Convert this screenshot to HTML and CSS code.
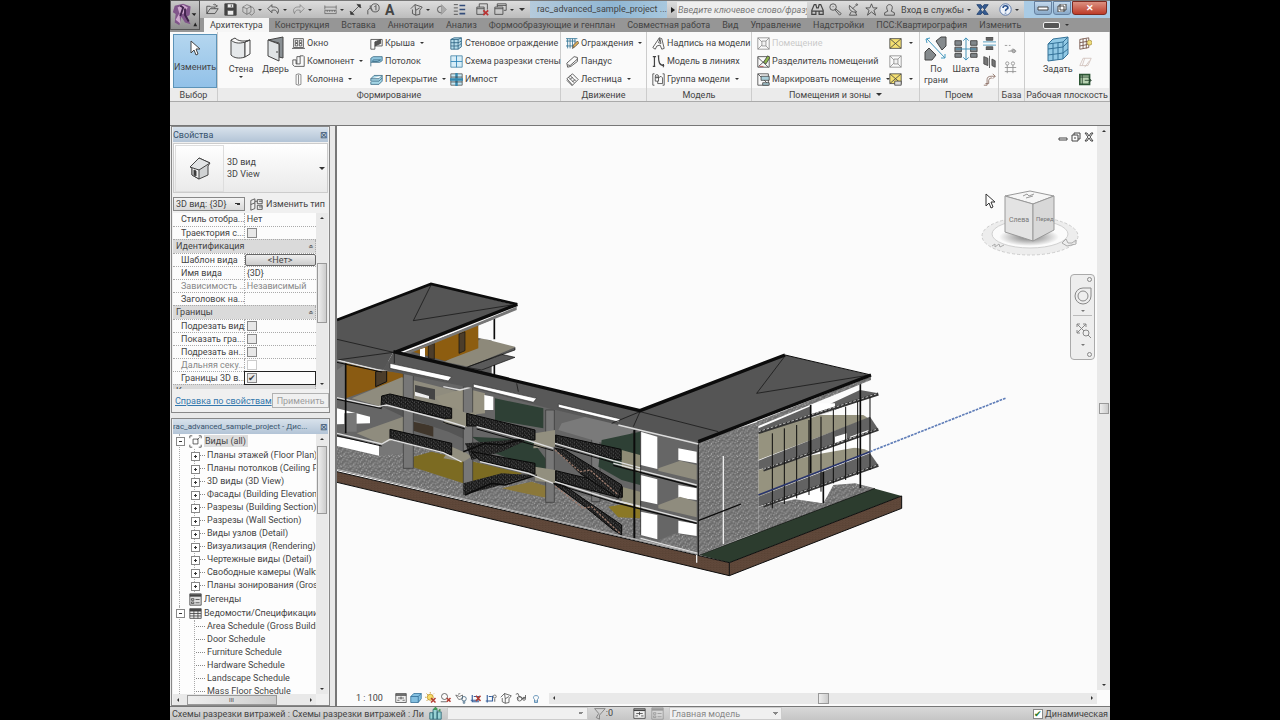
FILE: index.html
```html
<!DOCTYPE html>
<html lang="ru">
<head>
    <meta charset="UTF-8">
    <meta name="viewport" content="width=device-width, initial-scale=1.0">
    <title>rac_advanced_sample_project</title>
    <link rel="stylesheet" href="styles.css">
</head>
<body>
    <!-- Icon set -->
    <svg class="sprite" aria-hidden="true">
        <symbol id="open" viewBox="0 0 16 16"><path d="M1 13V4h4l1 1h5v2M1 13l4-6h10l-4 6zM9 2c2-1 4 0 4 2m-2-1 2 2 1-2"/></symbol>
        <symbol id="save" viewBox="0 0 16 16"><path d="M1 1h13l1 1v13H1z" fill="#444"/><path d="M4 1h8v5H4zM4 9h8v6H4z" fill="#eee"/><path d="M9 2v3"/></symbol>
        <symbol id="sync" viewBox="0 0 16 16"><path opacity=".6" d="m1 5 5-3 5 2v7l-5 3-5-3zM1 5l5 2 5-3M6 7v7M10 5h3l2 3v4l-3 3-3-2"/></symbol>
        <symbol id="undo" viewBox="0 0 16 16"><path d="M6 2 1 7l5 5V9c4-1 6 0 7 4 3-5 0-9-7-8z"/></symbol>
        <symbol id="redo" viewBox="0 0 16 16"><path opacity=".5" d="m10 2 5 5-5 5V9c-4-1-6 0-7 4-3-5 0-9 7-8z"/></symbol>
        <symbol id="measure" viewBox="0 0 16 16"><path opacity=".7" d="M1 3v5M15 3v5M1 5h14M1 9h14v4H1zM4 9v2M7 9v2M10 9v2M13 9v2"/></symbol>
        <symbol id="dim" viewBox="0 0 16 16"><path d="M3 13 13 3M1 10l5 5M10 1l5 5"/><path d="M2 14v-4l4 4zM14 2v4l-4-4z" fill="#333"/></symbol>
        <symbol id="tag" viewBox="0 0 16 16"><path d="M1 14V9l3-3 3 3M4 6V3"/><circle cx="10" cy="6" r="5"/><path d="M9 5l2-2v6"/></symbol>
        <symbol id="home" viewBox="0 0 16 16"><path d="m1 7 5-5 9 3-3 4v5l-5 1-4-2V8M6 2l1 7 5-3M7 9v6"/></symbol>
        <symbol id="section" viewBox="0 0 16 16"><circle cx="7" cy="8" r="4"/><path d="M8 2v12l6-6z" fill="#aaa" stroke="#999"/></symbol>
        <symbol id="lines" viewBox="0 0 16 16"><path d="M1 2h5M1 6h5M1 10h5M1 14h5" stroke-width="1"/><path d="M8 3h7M8 8h7M8 13h7" stroke="#334c7a" stroke-width="2"/></symbol>
        <symbol id="closewin" viewBox="0 0 16 16"><path d="M4 5V1h10v7M1 5h9v9H1zM1 7h9"/><path d="m9 9 6 6m0-6-6 6" stroke="#b33" stroke-width="2"/></symbol>
        <symbol id="windows" viewBox="0 0 16 16"><path d="M4 5V1h11v8h-3M1 5h10v9H1zM1 7h10M4 3h11"/></symbol>
        <symbol id="binoc" viewBox="0 0 16 16"><path d="M1 14V9l3-7h2l1 4h2l1-4h2l3 7v5h-5v-4H6v4zM1 10h5M10 10h5" stroke-width="1.5"/></symbol>
        <symbol id="key" viewBox="0 0 16 16"><circle cx="5" cy="5" r="4"/><path d="m7 8 6 7 2-2-7-6M5 4v1"/></symbol>
        <symbol id="dish" viewBox="0 0 16 16"><path d="M3 3c-1 6 3 9 9 8zM7 7l4-4M5 11l-2 4h9l-2-4"/><circle cx="12" cy="2" r="1"/></symbol>
        <symbol id="star" viewBox="0 0 16 16"><path d="m8 1 2 5h5l-4 3 2 6-5-4-5 4 2-6-4-3h5z"/></symbol>
        <symbol id="user" viewBox="0 0 16 16"><path d="M5 8c-3-8 9-8 6 0l-1 2 4 2v3H2v-3l4-2z"/></symbol>
        <symbol id="exchange" viewBox="0 0 16 16"><path d="M1 2h5l9 12h-5zM15 2h-5L1 14h5z" fill="#345a91" stroke="#23436f"/></symbol>
        <symbol id="help" viewBox="0 0 16 16"><circle cx="8" cy="8" r="7" fill="#eef3fa" stroke="#4668a0"/><path d="M5 6c0-4 6-3 6 0 0 2-3 1-3 4M8 12v1" stroke="#28508c" stroke-width="2"/></symbol>
        <symbol id="arrow" viewBox="0 0 16 16"><path d="M4 1v12l3-3 2 5 2-1-2-5h4z" fill="#fff"/></symbol>
        <symbol id="wall" viewBox="0 0 24 26"><path d="M2 4c3 3 8 4 14 2v15c-6 2-11 1-14-2z" fill="#e5e8ea"/><path d="m2 4 4-2c3 3 8 4 15 2l-5 2M21 4v14l-5 3V6z" fill="#f8f8f8"/></symbol>
        <symbol id="door" viewBox="0 0 18 26"><path d="M1 4 16 1v21l-4-1V7L1 4z" fill="#8a9094"/><path d="m1 4 11 4v17L1 20z" fill="#dfe3e5"/><path d="M10 15v2"/></symbol>
        <symbol id="window" viewBox="0 0 16 16"><path d="M2 2h12v11H2zM0 14h16M4 4h3v3H4zM9 4h3v3H9zM4 8h3v3H4zM9 8h3v3H9z"/></symbol>
        <symbol id="component" viewBox="0 0 16 16"><path d="M1 6h4v5h5V1h4l1 1v12H3l-2-2zM6 2h4M6 2v9"/></symbol>
        <symbol id="column" viewBox="0 0 16 16"><path d="M5 2q3-2 6 0v12q-3 2-6 0zM8 2v12" stroke="#777"/></symbol>
        <symbol id="roof" viewBox="0 0 16 16"><path d="M1 15V3h14v8H6v4z"/><path d="M6 11V6l7-3v5z" fill="#555"/></symbol>
        <symbol id="ceiling" viewBox="0 0 16 16"><path d="M1 14V4l3-2h11v5l-3 2H1M4 6h9L9 8H3z" fill="#8fc5dd" stroke="#3c6c86"/></symbol>
        <symbol id="floor" viewBox="0 0 16 16"><path d="m1 7 4-4h10l-4 4zM1 7v3h10l4-4V3M1 11v3h10l4-4V6" fill="#a6d6e6" stroke="#3c6c86"/></symbol>
        <symbol id="curtain" viewBox="0 0 16 16"><path d="M1 3 5 1h9v11l-4 3H1zM1 3h9v12M10 3l4-2M5 3v12M1 7h9l4-2M1 11h9l4-3" fill="#b5dbea" stroke="#276080"/></symbol>
        <symbol id="grid" viewBox="0 0 16 16"><path d="M1 1h14v14H1z" fill="#d7edf7" stroke="#4584a4"/><path d="M8 1v14M1 8h14" stroke="#287fb4"/></symbol>
        <symbol id="mullion" viewBox="0 0 16 16"><path d="M1 1h14v14H1z" fill="#c6e8f4" stroke="#555"/><path d="M8 0v16M0 8h16" stroke="#3587ad" stroke-width="3"/><path d="M1 5h14M1 11h14" stroke="#444"/></symbol>
        <symbol id="railing" viewBox="0 0 16 16"><path d="M0 2h14M0 5h12M2 2v12M5 2v12M8 2v10M11 2v6M0 11h8" stroke="#2d7192"/><path d="m8 14 1-4 5-5 2 2-5 5z" fill="#e6b255"/></symbol>
        <symbol id="ramp" viewBox="0 0 16 16"><path d="m1 10 9-8 4 1v5l-8 6-4 1zM2 12l3 1 9-8"/></symbol>
        <symbol id="stair" viewBox="0 0 16 16"><path d="m1 7 7-6 7 7-7 7zM3 5l7 7M5 3l7 7M1 9l7 7M5 8l3-3M8 11l3-3"/></symbol>
        <symbol id="text" viewBox="0 0 16 16"><path d="m1 13 8-12 3 1 3 12-3 1-2-5-4 1-2 4zM8 7l2-4 1 5zM9 1v4"/></symbol>
        <symbol id="mlines" viewBox="0 0 16 16"><path d="M1 2h4M3 2v12M1 14h3M8 1c0 8 1 12 7 12M7 1h2M14 11v4" stroke-width="1.5"/></symbol>
        <symbol id="group" viewBox="0 0 16 16"><path d="M3 1H1v14h2M13 1h2v14h-2M4 5h4v5H4zM8 6l3-2 2 2v7H7v-3"/><circle cx="6" cy="4" r="2"/></symbol>
        <symbol id="room" viewBox="0 0 16 16"><path d="M1 1h14v14H1zM1 1l14 14M15 1 1 15"/><path d="M6 5h5v6H6z" fill="#eee"/></symbol>
        <symbol id="divider" viewBox="0 0 16 16"><path d="M1 2h14v13H1zM1 3l13 12M14 3 2 14"/><path d="m8 9 5-8 3 2-5 8z" fill="#8fb64c"/><path d="M3 14h5" stroke="#b54141"/></symbol>
        <symbol id="roomtag" viewBox="0 0 16 16"><path d="M1 1h13v14H1zM1 1l13 13"/><path d="M5 4h10v5H5zM7 12h8v3H7z" fill="#a9ced9"/></symbol>
        <symbol id="area" viewBox="0 0 16 16"><path d="M1 2h14v12H1z" fill="#f4df70"/><path d="m1 2 14 12M15 2 1 14"/></symbol>
        <symbol id="areatag" viewBox="0 0 16 16"><path d="M1 1h14v12H1z" fill="#f4df70"/><path d="m1 1 14 12M15 1 1 13"/><path d="M7 10h8v5H7z" fill="#ddd"/></symbol>
        <symbol id="face" viewBox="0 0 24 26"><path d="m3 3 18 19M6 2 2 3l1 4M21 18v4h-4" stroke="#4297bd"/><path d="m12 5 5-4h5v9l-4 4zM1 16l4-4 7 7-4 5H1z" fill="#858a8d"/></symbol>
        <symbol id="shaft" viewBox="0 0 26 26"><path d="M1 4h7v5H1zM18 4h7v5h-7zM1 11h7v5H1zM18 11h7v5h-7zM1 18h7v4H1zM18 18h7v4h-7z" fill="#81878b"/><path d="M13 1v24M2 13h22M10 4l3-3 3 3M10 22l3 3 3-3" stroke="#398cb4"/></symbol>
        <symbol id="opening" viewBox="0 0 16 16"><path d="M4 0h8v4H4zM4 12h8v4H4z" fill="#666"/><path d="M0 6h16M0 10h16" stroke="#398cb4"/></symbol>
        <symbol id="vertical" viewBox="0 0 16 16"><path d="M1 2l5 2v9l-5-2zM11 5l4 2v8l-4-2z" fill="#777"/><path d="M8 1v15"/></symbol>
        <symbol id="dormer" viewBox="0 0 16 16"><path d="M1 15h4V8q0-4 5-4h5M3 13h4V9q0-3 4-3M12 1l3 3-3 3" stroke="#86675c"/></symbol>
        <symbol id="level" viewBox="0 0 16 16"><path d="M1 3h3M6 3h2M5 10h10M8 10l3-3 3 3"/><circle cx="12" cy="10" r="2" fill="#888"/></symbol>
        <symbol id="axis" viewBox="0 0 16 16"><path d="M4 5v10M11 5v10M1 8h14M1 13h14"/><circle cx="4" cy="3" r="2"/><circle cx="11" cy="3" r="2"/></symbol>
        <symbol id="plane" viewBox="0 0 24 26"><path d="m2 8 5-5 15-2v17l-5 5-15 2z" fill="#91c9e5" stroke="#347298"/><path d="M2 8l15-2v17M17 6l5-5M7 7v17M12 7v17M2 13l15-2 5-5M2 19l15-2 5-4" stroke="#347298"/></symbol>
        <symbol id="show" viewBox="0 0 16 16"><path d="M1 3l11-2v12L1 15zM1 7l11-2M1 11l11-2M5 2v12M9 2v12" stroke="#6c4a3d"/><circle cx="13" cy="7" r="3" fill="#eedc79" stroke="#aa9448"/></symbol>
        <symbol id="ref" viewBox="0 0 16 16"><path d="m1 13 4-9h10l-4 9zM7 4l-3 9M13 7l-6 8" stroke="#b59b91"/></symbol>
        <symbol id="viewer" viewBox="0 0 16 16"><path d="M1 2h12v12H1z" fill="#b9d3b2" stroke="#2d5635" stroke-width="2"/><path d="M4 2v12M1 5h12M7 9h8m-3-3 3 3-3 3" stroke="#203d29"/></symbol>
        <symbol id="house" viewBox="0 0 26 26"><path d="m3 12 9-9 11 5-2 3v9l-9 4-7-4v-8z" fill="#d0d2d3"/><path d="m5 12 6-6 1 9v9l-7-4z" fill="#eee"/><path d="m12 3 11 5-11 7-9-3z" fill="#e2e4e5"/><path d="M7 15v5l2 1v-5z" fill="#333"/></symbol>
        <symbol id="type" viewBox="0 0 16 16"><path d="M1 3l5-2v12l-5 2zM1 8l5-2M6 4h3M9 2h6v5H9zM9 9h6v5H9zM11 4h4M11 11h4"/></symbol>
        <symbol id="views" viewBox="0 0 16 16"><path d="M4 1H1v3M12 1h3v3M1 12v3h3M15 12v3h-3M5 5h6v6H5zM10 6l3-3"/></symbol>
        <symbol id="legend" viewBox="0 0 16 16"><path d="M1 1h14v14H1z" fill="#ddd"/><path d="M1 3h14" stroke-width="3"/><path d="M3 7h3v2H3zM3 11h3v2H3zM8 8h5M8 12h5"/></symbol>
        <symbol id="schedule" viewBox="0 0 16 16"><path d="M1 2h14v12H1z" fill="#eee"/><path d="M1 4h14" stroke-width="3"/><path d="M1 8h14M1 11h14M6 4v10M11 4v10"/></symbol>
        <symbol id="sheet" viewBox="0 0 16 16"><path d="M1 2h14v12H1z" fill="#eee"/><path d="M1 4h14" stroke-width="2"/><path d="M4 8h8M3 11h3M10 11h3M8 6v4"/></symbol>
        <symbol id="box" viewBox="0 0 16 16"><path d="m1 6 4-4h10v7l-4 5H1zM1 6h10v8M11 6l4-4" fill="#83bfe0" stroke="#2c6993"/></symbol>
        <symbol id="sun" viewBox="0 0 16 16"><circle cx="7" cy="7" r="4" fill="#f5dc68" stroke="#bf8c20"/><path d="M7 0v2M0 7h2M2 2l2 2M12 2l-1 1M2 12l2-2" stroke="#bf8c20"/><path d="m8 8 6 6m0-6-6 6" stroke="#b23c32" stroke-width="2"/></symbol>
        <symbol id="shadow" viewBox="0 0 16 16"><circle cx="6" cy="6" r="4"/><path d="M1 13h8"/><path d="m9 8 5 5m0-5-5 5" stroke="#b23c32" stroke-width="2"/></symbol>
        <symbol id="lock" viewBox="0 0 16 16"><path d="M1 4l4 6 5-1V4L6 6 1 4M4 3l3-1" stroke="#555"/><circle cx="12" cy="9" r="3" stroke="#355f7c"/><path d="M11 12v3h2v-3" stroke="#355f7c"/></symbol>
        <symbol id="nocrop" viewBox="0 0 16 16"><path d="M3 4v9h9M1 11h10V6M5 6h8" stroke="#355f9c" stroke-width="1.5"/><path d="m8 5 6 7m0-7-6 7" stroke="#b23c32" stroke-width="2"/></symbol>
        <symbol id="crop" viewBox="0 0 16 16"><path d="M3 4v10M1 12h9V5M5 6h4" stroke="#355f9c" stroke-width="1.5"/><circle cx="13" cy="6" r="2" stroke="#555"/><path d="M13 9v4"/></symbol>
        <symbol id="glasses" viewBox="0 0 16 16"><path d="m1 3 3-1 2 5c2-1 3 0 4 2l4-1V4M3 7l2 3"/><circle cx="6" cy="9" r="3"/><circle cx="12" cy="9" r="2"/></symbol>
        <symbol id="bulb" viewBox="0 0 16 16"><path d="M6 10c-6-7 10-7 4 0v4H6zM6 12h4" stroke="#3c77a5"/></symbol>
        <symbol id="works" viewBox="0 0 16 16"><path d="M1 7h4v8H1zM5 3h5v12H5zM10 6h5v9h-5z" fill="#98d2d5" stroke="#276372"/><path d="m6 3 2-2 2 2M12 5l2-2" stroke="#409b55" stroke-width="2"/></symbol>
        <symbol id="filter" viewBox="0 0 16 16"><path d="M2 2h13l-7 8v5l-4-2 3-5z" stroke="#777"/></symbol>
    </svg>

    <div class="app">
        <header class="top">
            <button class="logo" aria-label="Меню приложения">
                <svg viewBox="0 0 30 30">
                    <path d="M4 5 13 3l8 3-1 9-3 2 4 8-6-2-4-6-2 9-5-3 1-9-3-2z" fill="#80558a"/>
                    <path d="m7 7 6-3 5 3-5 7-4-1zM5 20l4-7 1 11z" fill="#cfa8cf"/>
                    <path d="m10 5 3 2-3 9M15 8v7l4 7" stroke="#40234b" fill="none" stroke-width="2"/>
                    <path d="M22 13h5l-2 3zM24 27l2-4 2 4z" fill="#222"/>
                </svg>
            </button>
            <div class="titlebar">
                <div class="quick">
                    <button><svg><use href="#open"/></svg></button>
                    <button><svg><use href="#save"/></svg></button>
                    <button class="drop"><svg><use href="#sync"/></svg></button>
                    <button class="drop"><svg><use href="#undo"/></svg></button>
                    <button class="drop"><svg><use href="#redo"/></svg></button>
                    <button class="drop wide"><svg><use href="#measure"/></svg></button>
                    <button><svg><use href="#dim"/></svg></button>
                    <button><svg><use href="#tag"/></svg></button>
                    <button class="letter">A</button>
                    <button class="drop wide"><svg><use href="#home"/></svg></button>
                    <button><svg><use href="#section"/></svg></button>
                    <button class="wide-icon"><svg><use href="#lines"/></svg></button>
                    <button><svg><use href="#closewin"/></svg></button>
                    <button class="drop"><svg><use href="#windows"/></svg></button>
                    <button class="more" aria-label="Настройка панели"></button>
                </div>
                <div class="doc-title">rac_advanced_sample_project ...</div>
                <div class="search">
                    <span class="play"></span>
                    <input type="text" aria-label="Поиск" placeholder="Введите ключевое слово/фразу">
                </div>
                <div class="services">
                    <button><svg><use href="#binoc"/></svg></button>
                    <button><svg><use href="#key"/></svg></button>
                    <button><svg><use href="#dish"/></svg></button>
                    <button><svg><use href="#star"/></svg></button>
                    <button><svg><use href="#user"/></svg></button>
                    <button class="drop">Вход в службы</button>
                    <button><svg><use href="#exchange"/></svg></button>
                    <button class="drop help"><svg><use href="#help"/></svg></button>
                </div>
                <div class="window-buttons">
                    <button aria-label="Свернуть"><svg viewBox="0 0 12 8"><path d="M1 3h10v3H1z" fill="#fff"/></svg></button>
                    <button aria-label="Развернуть"><svg viewBox="0 0 12 8"><path d="M4 0h6v6H4zM2 2h6v6H2z" fill="#fff"/></svg></button>
                    <button class="close" aria-label="Закрыть">✕</button>
                </div>
            </div>
            <nav class="tabs">
                <a class="active" href="#">Архитектура</a>
                <a href="#">Конструкция</a>
                <a href="#">Вставка</a>
                <a href="#">Аннотации</a>
                <a href="#">Анализ</a>
                <a href="#">Формообразующие и генплан</a>
                <a href="#">Совместная работа</a>
                <a href="#">Вид</a>
                <a href="#">Управление</a>
                <a href="#">Надстройки</a>
                <a href="#">ПСС:Квартирография</a>
                <a href="#">Изменить</a>
                <button class="collapse drop" aria-label="Свернуть ленту"><span></span></button>
            </nav>
        </header>

        <section class="ribbon">
            <div class="panel">
                <div class="tools select-tools">
                    <button class="big selected"><svg><use href="#arrow"/></svg>Изменить</button>
                </div>
                <h2>Выбор</h2>
            </div>
            <div class="panel">
                <div class="tools build-tools">
                    <button class="big caret-under"><svg><use href="#wall"/></svg>Стена</button>
                    <button class="big"><svg><use href="#door"/></svg>Дверь</button>
                    <div class="stack">
                        <button><svg><use href="#window"/></svg>Окно</button>
                        <button class="drop"><svg><use href="#component"/></svg>Компонент</button>
                        <button class="drop"><svg><use href="#column"/></svg>Колонна</button>
                    </div>
                    <div class="stack">
                        <button class="drop"><svg><use href="#roof"/></svg>Крыша</button>
                        <button><svg><use href="#ceiling"/></svg>Потолок</button>
                        <button class="drop"><svg><use href="#floor"/></svg>Перекрытие</button>
                    </div>
                    <div class="stack">
                        <button><svg><use href="#curtain"/></svg>Стеновое ограждение</button>
                        <button><svg><use href="#grid"/></svg>Схема разрезки стены</button>
                        <button><svg><use href="#mullion"/></svg>Импост</button>
                    </div>
                </div>
                <h2>Формирование</h2>
            </div>
            <div class="panel">
                <div class="tools">
                    <div class="stack">
                        <button class="drop"><svg><use href="#railing"/></svg>Ограждения</button>
                        <button><svg><use href="#ramp"/></svg>Пандус</button>
                        <button class="drop"><svg><use href="#stair"/></svg>Лестница</button>
                    </div>
                </div>
                <h2>Движение</h2>
            </div>
            <div class="panel">
                <div class="tools">
                    <div class="stack">
                        <button><svg><use href="#text"/></svg>Надпись на модели</button>
                        <button><svg><use href="#mlines"/></svg>Модель в линиях</button>
                        <button class="drop"><svg><use href="#group"/></svg>Группа модели</button>
                    </div>
                </div>
                <h2>Модель</h2>
            </div>
            <div class="panel">
                <div class="tools room-tools">
                    <div class="stack">
                        <button disabled><svg><use href="#room"/></svg>Помещение</button>
                        <button><svg><use href="#divider"/></svg>Разделитель помещений</button>
                        <button class="drop"><svg><use href="#roomtag"/></svg>Маркировать помещение</button>
                    </div>
                    <div class="stack">
                        <button class="drop"><svg><use href="#area"/></svg></button>
                        <button disabled><svg><use href="#room"/></svg></button>
                        <button class="drop"><svg><use href="#areatag"/></svg></button>
                    </div>
                </div>
                <h2 class="drop">Помещения и зоны</h2>
            </div>
            <div class="panel">
                <div class="tools opening-tools">
                    <button class="big"><svg><use href="#face"/></svg>По грани</button>
                    <button class="big"><svg><use href="#shaft"/></svg>Шахта</button>
                    <div class="stack">
                        <button><svg><use href="#opening"/></svg></button>
                        <button><svg><use href="#vertical"/></svg></button>
                        <button><svg><use href="#dormer"/></svg></button>
                    </div>
                </div>
                <h2>Проем</h2>
            </div>
            <div class="panel">
                <div class="tools datum-tools">
                    <button disabled><svg><use href="#level"/></svg></button>
                    <button disabled><svg><use href="#axis"/></svg></button>
                </div>
                <h2>База</h2>
            </div>
            <div class="panel">
                <div class="tools plane-tools">
                    <button class="big"><svg><use href="#plane"/></svg>Задать</button>
                    <div class="stack">
                        <button><svg><use href="#show"/></svg></button>
                        <button disabled><svg><use href="#ref"/></svg></button>
                        <button><svg><use href="#viewer"/></svg></button>
                    </div>
                </div>
                <h2>Рабочая плоскость</h2>
            </div>
        </section>

        <div class="options-bar"></div>

        <main class="workspace">
            <aside class="dock">
                <section class="palette properties">
                    <header><h3>Свойства</h3><button aria-label="Закрыть">⊠</button></header>
                    <button class="type-selector">
                        <span class="preview"><svg><use href="#house"/></svg></span>
                        <span>3D вид<br>3D View</span>
                    </button>
                    <div class="type-row">
                        <select aria-label="Вид"><option>3D вид: {3D}</option></select>
                        <button><svg><use href="#type"/></svg>Изменить тип</button>
                    </div>
                    <div class="scroll-area">
                        <div class="clip">
                            <table>
                                <tr><th>Стиль отобра...</th><td>Нет</td></tr>
                                <tr><th><label for="p1">Траектория с...</label></th><td><input type="checkbox" id="p1"></td></tr>
                                <tr class="section"><th colspan="2">Идентификация<i>«</i></th></tr>
                                <tr><th>Шаблон вида</th><td class="fill"><button>&lt;Нет&gt;</button></td></tr>
                                <tr><th>Имя вида</th><td>{3D}</td></tr>
                                <tr class="off"><th>Зависимость ...</th><td>Независимый</td></tr>
                                <tr><th>Заголовок на...</th><td></td></tr>
                                <tr class="section"><th colspan="2">Границы<i>«</i></th></tr>
                                <tr><th><label for="p2">Подрезать вид</label></th><td><input type="checkbox" id="p2"></td></tr>
                                <tr><th><label for="p3">Показать гра...</label></th><td><input type="checkbox" id="p3"></td></tr>
                                <tr><th><label for="p4">Подрезать ан...</label></th><td><input type="checkbox" id="p4"></td></tr>
                                <tr class="off"><th><label for="p5">Дальняя секу...</label></th><td><input type="checkbox" id="p5" disabled></td></tr>
                                <tr class="current"><th><label for="p6">Границы 3D в...</label></th><td><input type="checkbox" id="p6" checked></td></tr>
                                <tr class="section"><th colspan="2">Камера<i>«</i></th></tr>
                            </table>
                        </div>
                        <div class="vscroll props-scroll"><span class="thumb"></span></div>
                    </div>
                    <footer>
                        <a href="#">Справка по свойствам</a>
                        <button disabled>Применить</button>
                    </footer>
                </section>

                <section class="palette browser">
                    <header><h3>rac_advanced_sample_project - Дис...</h3><button aria-label="Закрыть">⊠</button></header>
                    <div class="scroll-area">
                        <ul class="tree clip">
                            <li class="root minus"><span><svg><use href="#views"/></svg><b>Виды (all)</b></span>
                                <ul>
                                    <li class="plus">Планы этажей (Floor Plan)</li>
                                    <li class="plus">Планы потолков (Ceiling Plan)</li>
                                    <li class="plus">3D виды (3D View)</li>
                                    <li class="plus">Фасады (Building Elevation)</li>
                                    <li class="plus">Разрезы (Building Section)</li>
                                    <li class="plus">Разрезы (Wall Section)</li>
                                    <li class="plus">Виды узлов (Detail)</li>
                                    <li class="plus">Визуализация (Rendering)</li>
                                    <li class="plus">Чертежные виды (Detail)</li>
                                    <li class="plus">Свободные камеры (Walkthrough)</li>
                                    <li class="plus">Планы зонирования (Gross Building)</li>
                                </ul>
                            </li>
                            <li class="root"><span><svg><use href="#legend"/></svg>Легенды</span></li>
                            <li class="root minus"><span><svg><use href="#schedule"/></svg>Ведомости/Спецификации</span>
                                <ul>
                                    <li>Area Schedule (Gross Building)</li>
                                    <li>Door Schedule</li>
                                    <li>Furniture Schedule</li>
                                    <li>Hardware Schedule</li>
                                    <li>Landscape Schedule</li>
                                    <li>Mass Floor Schedule</li>
                                </ul>
                            </li>
                        </ul>
                        <div class="vscroll tree-scroll"><span class="thumb"></span></div>
                    </div>
                    <div class="hscroll tree-hscroll"><span class="thumb">III</span></div>
                </section>
            </aside>

            <section class="view">
                <div class="canvas">
                    <svg class="model" viewBox="337 127 760 563" preserveAspectRatio="xMinYMin meet">
                        <defs>
                            <pattern id="concrete" width="29" height="31" patternUnits="userSpaceOnUse">
                                <rect width="29" height="31" fill="#747474"/>
                                <path d="M1 2h3M10 4h2M17 1h3M25 7h2M5 11h3M13 15h2M21 12h3M2 20h2M10 22h3M18 18h2M26 25h3M6 28h2M15 29h3M23 29h2" stroke="#bbb" stroke-width="3"/>
                                <path d="M5 6h2M13 9h3M22 4h2M1 15h3M9 17h2M17 8h3M25 17h2M6 25h3M14 25h2M21 22h3" stroke="#545454" stroke-width="3"/>
                            </pattern>
                            <pattern id="mesh" width="13" height="11" patternUnits="userSpaceOnUse">
                                <rect width="13" height="11" fill="#161616"/>
                                <path d="M2 2h3M8 5h3M4 9h2M11 9h2" stroke="#8c8c8c" stroke-width="2"/>
                            </pattern>
                            <pattern id="earth" width="9" height="7" patternUnits="userSpaceOnUse">
                                <rect width="9" height="7" fill="#624a3c"/>
                                <path d="M2 1v3M6 3v3" stroke="#4d382c" stroke-width="2"/>
                            </pattern>
                            <clipPath id="edge"><path d="M6 0h2500v1000H6z"/></clipPath>
                        </defs>
                        <g transform="translate(335 271) scale(.33333)" clip-path="url(#edge)">
                            <!-- site -->
                            <path d="M6 605 1183 878V917L6 637z" fill="url(#earth)"/>
                            <path d="M1183 878 1700 678V715L1183 917z" fill="url(#earth)"/>
                            <path d="M1093 855 1183 878 1700 678 1615 655z" fill="#2c3c2e"/>
                            <path d="M6 605 1183 878 1700 678V715L1183 917 6 637M1183 878V917" class="ink" stroke-width="3"/>

                            <!-- far wing -->
                            <path d="M200 250 470 145V330z" fill="#5c5c5c"/>
                            <path d="M330 275 440 205 540 230 530 242 400 290z" fill="#8d897a"/>
                            <path d="M400 290 540 240V232M395 292 500 253 540 262 440 300z" fill="#5a5a5a" stroke="#111" stroke-width="2"/>
                            <path d="M225 243 430 165V235L330 273z" fill="#8d5d10"/>
                            <path d="M430 165 475 148V212L430 204z" fill="#fbfbfb"/>
                            <path d="M255 238 270 233V262L255 258z" fill="#fff"/>
                            <path d="M372 192 390 185V242L372 250zM280 226 298 220V268L280 264z" fill="#4c3d2a" stroke="#111" stroke-width="2"/>
                            <path d="M478 145V208M478 285V325" class="ink" stroke-width="5"/>

                            <!-- open building section -->
                            <path d="M6 265 170 275 920 440 1090 515V855L6 600z" fill="#666"/>
                            <path d="M6 525 190 500 380 560 640 650 1090 760V855L6 600z" fill="url(#concrete)"/>
                            <path d="M6 300 32 282V385L6 380z" fill="#777"/>
                            <path d="M32 280 120 300 205 310V325L32 385z" fill="#8a5b12"/>
                            <path d="M122 305 155 300V335L122 350z" fill="#4c3d2a" stroke="#111" stroke-width="3"/>
                            <path d="M50 385 200 322 390 370 350 412 145 385 140 410z" fill="#8f8c7e"/>
                            <path d="M6 415 105 440V460L6 463z" fill="#fff"/>
                            <path d="M28 430 65 428V485H28z" fill="#777"/>
                            <path d="M65 490 205 440 225 475V515L135 520z" fill="#8f8c7e"/>
                            <path d="M6 500 132 525V557L6 528z" fill="#fff"/>
                            <path d="M132 525 225 490V548L132 557z" fill="#777"/>
                            <path d="M235 560 290 545 560 610 540 625 385 640 235 592z" fill="#7c6b22"/>
                            <path d="M500 655 590 635 640 650V685z" fill="#8b7839"/>
                            <path d="M300 380 390 355 450 370V430L350 440z" fill="#959180"/>
                            <path d="M480 385 625 415V475L480 450z" fill="#2e4035"/>
                            <path d="M410 500 590 510 650 590V615L480 550z" fill="#2e4035"/>
                            <path d="M448 375 475 380V420H448z" fill="#fff"/>
                            <path d="M240 345 300 358V390L240 376z" fill="#444"/>
                            <path d="M240 365 282 378V386L240 377z" fill="#eee"/>
                            <path d="M235 455 295 468V500L235 482z" fill="#40362b"/>
                            <path d="M145 412 235 415 385 455 415 475 395 510 340 485 205 440z" fill="#555"/>
                            <path d="M205 305H235V595H205zM385 350H413V665H385zM632 420H658V697H632zM770 445H795V695H770z" fill="#777" stroke="#333" stroke-width="2"/>
                            <path d="M350 410 395 430 430 425 395 470 325 460zM350 530 395 550 410 560 385 575 325 565zM600 490 660 480V530L595 535zM600 590 660 600V640L600 632z" fill="#928f7f"/>
                            <path d="M680 460 770 435 900 480 840 530 670 480z" fill="#7a7a7a"/>
                            <path d="M800 510 915 485V645L860 630 790 590z" fill="#2e4035"/>
                            <path d="M860 540 915 555V610L860 590zM860 650 915 665V715L860 700z" fill="#8e8b75"/>
                            <path d="M820 710 880 700 915 710V745L850 742z" fill="#8b7825"/>
                            <path d="M390 520 590 505 500 545 410 570zM385 640 500 610 600 615 480 650 385 675z" fill="url(#mesh)"/>
                            <path d="M390 675 470 640 510 645 605 615M385 545 450 520 500 525 590 500" class="ink" stroke-width="5"/>
                            <g fill="url(#mesh)" stroke="#080808" stroke-width="3">
                                <path d="M140 378 165 372 350 415V445L330 445 155 405 138 412z"/>
                                <path d="M165 478 350 520V555L330 548 165 508z"/>
                                <path d="M395 430 600 480V510L575 508 425 468 395 468z"/>
                                <path d="M410 545 600 580V612L580 605 435 572z"/>
                                <path d="M662 495 858 538V570L835 568 662 520z"/>
                                <path d="M662 602 862 650V682L840 680 662 633z"/>
                                <path d="M660 535 690 540 860 645 850 685 735 610z"/>
                                <path d="M655 640 685 645 860 765V795L835 780 750 710z"/>
                            </g>
                            <path d="M660 540 735 605 765 600 850 675M660 648 745 715 770 710 855 790" stroke="#99796b" stroke-width="4" stroke-dasharray="7 4" fill="none"/>
                            <path d="M6 270 130 300 165 300M6 383 130 410 155 405 325 450 390 470M6 490 140 522 165 508 325 548 380 576M325 350 375 360 415 350M425 470 575 510 655 535M435 575 580 610 655 640M660 520 835 572 1090 640M660 635 835 690 1090 750" stroke="#ddd" stroke-width="4" fill="none"/>
                            <path d="M6 277 140 306M6 388 140 416M325 457 390 477M425 477 655 542M660 527 835 578M660 642 835 696M6 497 140 528" class="ink" stroke-width="3"/>
                            <path d="M32 280V490" class="ink" stroke-width="5"/>

                            <!-- right bays -->
                            <path d="M917 480 1090 515V850L917 800z" fill="#666"/>
                            <path d="M917 485 967 500V597L917 585zM917 615 967 628V703L917 692zM917 725 967 735V808L917 795z" fill="#fff"/>
                            <path d="M1030 535 1085 545V580L1030 570zM1030 645 1085 655V690L1030 683zM1030 752 1085 762V798L1030 790z" fill="#fff"/>
                            <path d="M970 595 1035 572 1085 585V630L970 602zM970 705 1035 680 1085 695V742L970 715z" fill="#8f8c7e"/>
                            <path d="M970 812 1020 790 1085 803V850L970 825z" fill="url(#concrete)"/>
                            <path d="M835 580 1085 645M835 690 1085 755M917 805 1090 850" stroke="#ddd" stroke-width="4"/>
                            <path d="M835 586 1085 651M835 696 1085 760" class="ink" stroke-width="4"/>
                            <path d="M898 480V805" class="ink" stroke-width="6"/>
                            <path d="M917 480V795" class="ink" stroke-width="2"/>
                            <path d="M6 598 1090 852" stroke="#bbb" stroke-width="3"/>

                            <!-- glazed side -->
                            <path d="M1270 475 1435 405 1435 425 1575 360 1630 370 1485 425 1270 492z" fill="#606060"/>
                            <path d="M1270 490 1425 435 1585 435 1600 445 1270 570z" fill="#96937f"/>
                            <path d="M1270 572 1605 440 1630 478 1270 600z" fill="#626262"/>
                            <path d="M1270 600 1435 555 1575 530 1605 545 1270 680z" fill="#96937f"/>
                            <path d="M1270 680 1605 550 1630 585 1270 710z" fill="#626262"/>
                            <path d="M1270 710 1395 685 1465 700 1495 645 1560 640 1620 655 1270 787z" fill="url(#concrete)"/>
                            <path d="M1425 400H1500V420L1425 445zM1500 500 1535 490V520L1500 530zM1545 500 1600 480V540L1545 530z" fill="#fff"/>
                            <path d="M1360 685 1465 650V700z" fill="#fff"/>
                            <path d="M1270 488 1630 372M1285 600 1630 478M1285 708 1630 586" stroke="#333" stroke-width="9"/>
                            <path d="M1270 485 1630 370M1285 598 1630 476M1285 706 1630 584" stroke="#bbb" stroke-width="3" stroke-dasharray="8 5"/>
                            <path d="M1312 490V715M1348 475V702M1385 465V685M1422 450V675M1458 440V665M1495 420V640M1532 410V630M1568 395V615M1605 380V600" class="ink" stroke-width="3"/>
                            <path d="M1427 405V610M1465 605V700M1576 340V655" class="ink" stroke-width="5"/>
                            <path d="M1270 675 1605 545" stroke="#29356d" stroke-width="5"/>
                            <path d="M1605 545 2013 384" stroke="#5f7db8" stroke-width="5" stroke-dasharray="8 3"/>

                            <!-- end wall -->
                            <path d="M1090 512 1270 455V785L1090 855z" fill="url(#concrete)"/>
                            <path d="M1090 512V855" stroke="#222" stroke-width="4"/>
                            <path d="M1165 558V822M1085 855V878" stroke="#eee" stroke-width="4"/>
                            <path d="M1090 752 1218 702" class="ink" stroke-width="4"/>
                            <path d="M1093 855 1620 655" class="ink" stroke-width="2"/>

                            <!-- roofs -->
                            <path d="M6 150 288 42 540 105 175 247 145 300 6 268z" fill="#555"/>
                            <path d="M175 247 915 425 1090 515 960 492 830 460 640 415 415 355 145 300z" fill="#585858"/>
                            <path d="M915 423 1350 255 1605 315 1090 515 830 460z" fill="#555"/>
                            <path d="M195 255 545 110V120L225 250z" fill="#777"/>
                            <path d="M1265 455 1608 318V330L1270 468z" fill="url(#concrete)"/>
                            <path d="M850 465 1090 522" stroke="#ddd" stroke-width="4"/>
                            <path d="M165 280 350 320 340 333 165 295zM415 342 605 385 595 397 415 352zM670 402 857 447 850 456 670 412z" fill="#fff" stroke="#333" stroke-width="2"/>
                            <path d="M6 208 175 247 6 270M288 45 235 152 530 105M1350 258 1265 370 1605 315M915 425 1150 485M915 425 830 460M915 425 895 470M545 340 550 365M178 247V280" class="ink" stroke-width="2"/>
                            <path d="M6 150 288 42 547 103" class="ink" stroke-width="8"/>
                            <path d="M547 103 180 247M175 245 915 422 1350 255M1608 315 1090 515" class="ink" stroke-width="10"/>
                            <path d="M1350 255 1608 315" class="ink" stroke-width="3"/>
                        </g>
                    </svg>

                    <div class="view-buttons">
                        <button aria-label="Свернуть вид"><svg viewBox="0 0 10 10"><path d="M1 6h8v2H1z"/></svg></button>
                        <button aria-label="Развернуть вид"><svg viewBox="0 0 10 10"><path d="M1 3h6v6H1zM3 3V1h6v6H7M4 5v2"/></svg></button>
                        <button aria-label="Закрыть вид"><svg viewBox="0 0 10 10"><path d="M1 1h2l2 3 2-3h2L6 5l3 4H7L5 6 3 9H1l3-4z"/></svg></button>
                    </div>
                    <svg class="cube" viewBox="0 0 120 80">
                        <defs>
                            <radialGradient id="shade"><stop stop-color="#777"/><stop offset="1" stop-color="#fbfbfb"/></radialGradient>
                        </defs>
                        <ellipse cx="50" cy="49" rx="48" ry="19" fill="#ededed" stroke="#ccc" stroke-dasharray="3 2"/>
                        <ellipse cx="50" cy="47" rx="38" ry="14" fill="#fbfbfb" stroke="#d0d0d0"/>
                        <ellipse cx="49" cy="50" rx="30" ry="9" fill="url(#shade)" stroke="none"/>
                        <path d="M25 9 50 4 74 9 53 17z" fill="#f6f6f6" stroke="#999"/>
                        <path d="M25 9 53 17V54L25 45z" fill="#e3e3e3" stroke="#999"/>
                        <path d="M53 17 74 9V43L53 54z" fill="#d8d8d8" stroke="#999"/>
                        <path d="m43 9 4-2 2 2 5-2M46 11l7-2" fill="none" stroke="#999"/>
                        <text x="29" y="35">Слева</text>
                        <text x="56" y="34" class="small">Перед</text>
                        <path d="m12 59 3-2v3l4-3 1 3 4-2M82 56l4-4 2 4h4l4-3v4l-9 2z" fill="none" stroke="#aaa"/>
                    </svg>
                    <svg class="pointer" viewBox="0 0 10 16"><path d="M1 1v12l3-3 2 5 2-1-2-5h4z" fill="#fff" stroke="#333"/></svg>
                    <div class="navbar">
                        <span class="dot"></span>
                        <button aria-label="Штурвал"><svg viewBox="0 0 18 18"><path d="M9 1h8v8a8 8 0 1 1-8-8z"/><circle cx="9" cy="9" r="5"/></svg></button>
                        <i></i>
                        <hr>
                        <button aria-label="Масштаб"><svg viewBox="0 0 18 18"><path d="m3 3 9 9M12 3l-9 9M3 6V3h3M9 3h3v3M3 9v3h3"/><circle cx="12" cy="12" r="3" fill="#eee"/><path d="m14 14 3 3"/></svg></button>
                        <i></i>
                        <span class="dot"></span>
                    </div>
                </div>
                <div class="vscroll view-scroll"><span class="thumb"></span></div>
                <div class="view-bar">
                    <span class="scale">1 : 100</span>
                    <button><svg><use href="#sheet"/></svg></button>
                    <button><svg><use href="#box"/></svg></button>
                    <button><svg><use href="#sun"/></svg></button>
                    <button><svg><use href="#shadow"/></svg></button>
                    <button><svg><use href="#lock"/></svg></button>
                    <button><svg><use href="#nocrop"/></svg></button>
                    <button><svg><use href="#crop"/></svg></button>
                    <button><svg><use href="#home"/></svg></button>
                    <button><svg><use href="#glasses"/></svg></button>
                    <button><svg><use href="#bulb"/></svg></button>
                    <div class="hscroll view-hscroll"><span class="thumb"></span></div>
                </div>
            </section>
        </main>

        <footer class="status">
            <span class="hint">Схемы разрезки витражей : Схемы разрезки витражей : Ли</span>
            <svg><use href="#works"/></svg>
            <select class="workset" aria-label="Рабочий набор"><option></option></select>
            <span class="count"><svg><use href="#filter"/></svg>:0</span>
            <svg><use href="#sheet"/></svg>
            <svg class="faded"><use href="#legend"/></svg>
            <select class="option" aria-label="Вариант" disabled><option>Главная модель</option></select>
            <label class="dynamic"><input type="checkbox" checked><span>Динамическая рамка</span></label>
        </footer>
    </div>
</body>
</html>
```
FILE: styles.css
```css
* {
    box-sizing: border-box;
}

body {
    margin: 0;
    padding: 0 170px;
    background: #000;
    color: #444;
    font: 9px/12px Roboto, "Noto Sans", sans-serif;
}

button {
    display: flex;
    align-items: center;
    padding: 0;
    border: 0;
    background: none;
    color: inherit;
    font: inherit;
    white-space: nowrap;
}

button:disabled {
    color: #aaa;
    opacity: 0.6;
}

input,
select {
    font: inherit;
    color: inherit;
}

a {
    color: inherit;
    text-decoration: none;
}

h2,
h3 {
    margin: 0;
    font: inherit;
}

svg {
    flex: none;
    width: 13px;
    height: 13px;
    fill: none;
    stroke: #444;
}

.sprite {
    position: absolute;
    width: 0;
    height: 0;
}

.app {
    display: flex;
    flex-direction: column;
    height: 100vh;
    overflow: hidden;
    background: #d6d6d6;
}

/* Small down arrow after drop-down buttons */
.drop::after,
.caret-under::after,
.type-selector::after,
.more::after {
    content: "";
    flex: none;
    margin-left: 5px;
    border: 2px solid transparent;
    border-top-color: #333;
    border-bottom: 0;
}

/* Title bar and tabs */
.top {
    display: grid;
    grid-template-columns: 30px minmax(0, 1fr);
    grid-template-rows: 18px 14px;
    background: #969696;
}

.logo {
    grid-row: 1 / 3;
    height: 30px;
    border: 1px solid #555;
    background: linear-gradient(#c8c8c8, #8e8e8e);
}

.logo svg {
    width: 28px;
    height: 28px;
    stroke: none;
}

.titlebar {
    display: flex;
    align-items: center;
    border-top: 1px solid #777;
    background: linear-gradient(#ddd, #bcbcbc);
    overflow: hidden;
}

.quick {
    display: flex;
    flex: none;
    align-items: center;
    gap: 5px;
    padding-left: 6px;
    width: 330px;
}

.quick .drop::after,
.services .drop::after {
    margin-left: 3px;
}

.quick .wide {
    margin-left: 7px;
}

.wide-icon {
    margin-right: 5px;
}

.quick .more::after {
    margin-left: 0;
    border-width: 3px 3px 0;
}

.letter {
    width: 13px;
    font-size: 14px;
    font-weight: 700;
}

.doc-title {
    flex: none;
    width: 137px;
    height: 18px;
    padding-left: 7px;
    overflow: hidden;
    background: linear-gradient(90deg, #b5cbdc, #8fb6d3 60%, #a8c8de);
    line-height: 17px;
    white-space: nowrap;
}

.search {
    display: flex;
    flex: 1;
    align-items: center;
    gap: 2px;
    min-width: 0;
    padding-left: 4px;
}

.play {
    border: 3px solid transparent;
    border-left: 4px solid #222;
    border-right: 0;
}

.search input {
    flex: 1;
    min-width: 0;
    height: 16px;
    padding: 0 0 0 1px;
    border: 0;
    background: #eee;
    font-style: italic;
}

.search input::placeholder {
    color: #777;
}

.services {
    display: flex;
    flex: none;
    align-items: center;
    gap: 5px;
    padding: 0 5px 0 4px;
}

.services .help {
    padding-left: 5px;
}

.window-buttons {
    display: flex;
    flex: none;
    gap: 1px;
    height: 18px;
    padding: 0 3px 4px 10px;
    background: #a9cbe5;
}

.window-buttons button {
    justify-content: center;
    width: 18px;
    border: 1px solid #6681a0;
    border-radius: 0 0 3px 3px;
    background: linear-gradient(#c4d9ec, #88a9c9);
}

.window-buttons svg {
    width: 12px;
    height: 8px;
}

.window-buttons .close {
    width: 35px;
    border-color: #7d2c22;
    background: linear-gradient(#dc9181, #bd3c29);
    color: #fff;
    font-weight: 700;
}

.tabs {
    display: flex;
    padding-left: 4px;
    line-height: 15px;
    white-space: nowrap;
}

.tabs a {
    padding: 0 6px;
}

.tabs .active {
    background: #f6f6f6;
}

.collapse {
    margin-left: 16px;
}

.collapse span {
    width: 17px;
    height: 7px;
    border: 1px solid #eee;
    border-radius: 2px;
    background: #555;
}

/* Ribbon */
.ribbon {
    display: grid;
    grid-template-columns: 48fr 343fr 86fr 105fr 168fr 79fr 26fr 85fr;
    height: 70px;
    background: #fafafa;
    border-bottom: 1px solid #aaa;
}

.panel {
    display: flex;
    flex-direction: column;
    min-width: 0;
    border-right: 1px solid #ccc;
}

.panel h2 {
    display: flex;
    align-items: center;
    justify-content: center;
    height: 13px;
    background: #ebebeb;
    white-space: nowrap;
}

.panel h2.drop::after {
    border-width: 3px 3px 0;
}

.tools {
    display: flex;
    flex: 1;
    min-width: 0;
    padding: 2px 3px 0 5px;
}

.stack {
    display: grid;
    grid-template-rows: repeat(3, 18px);
    align-content: start;
    flex: 1;
    min-width: 0;
}

.stack svg {
    margin-right: 2px;
}

.big {
    flex-direction: column;
    height: 54px;
    line-height: 11px;
}

.big svg {
    width: 24px;
    height: 26px;
    margin: 2px 0;
}

.select-tools {
    padding: 2px 2px 0 3px;
}

.selected {
    flex: 1;
    border: 1px solid #5c93b8;
    background: linear-gradient(#b4d6ef, #92c1e8);
}

.big.selected svg {
    height: 16px;
    margin: 5px 0 6px;
}

.caret-under::after {
    margin: 1px 0 0;
}

.build-tools {
    display: grid;
    grid-template-columns: 36px 33px 78px 80px 1fr;
}

.room-tools .stack:last-child {
    flex: 0 0 27px;
}

.opening-tools {
    padding: 2px 0 0 1px;
}

.opening-tools .big {
    width: 30px;
    white-space: normal;
}

.opening-tools .stack {
    padding-left: 2px;
}

.datum-tools {
    flex-direction: column;
    gap: 5px;
    padding: 11px 5px 0;
}

.plane-tools {
    padding-left: 18px;
}

.plane-tools .stack {
    padding-left: 6px;
}

.options-bar {
    height: 24px;
    background: #e2e2e2;
    border-bottom: 1px solid #777;
}

/* Workspace */
.workspace {
    display: grid;
    grid-template-columns: 167px minmax(0, 1fr);
    flex: 1;
    min-height: 0;
}

.dock {
    display: flex;
    flex-direction: column;
    gap: 5px;
    min-height: 0;
    padding: 0 5px 0 1px;
    background: #e9e9e9;
    border-right: 2px solid #777;
}

.palette {
    display: flex;
    flex-direction: column;
    min-height: 0;
    border: 1px solid #888;
    background: #f0f0f0;
    padding: 0 1px;
}

.properties {
    flex: 0 0 287px;
}

.browser {
    flex: 1;
}

.palette header {
    display: flex;
    align-items: center;
    justify-content: space-between;
    flex: none;
    height: 15px;
    background: linear-gradient(#d8e2ec, #b3c4d6);
    color: #38536e;
    white-space: nowrap;
}

/* The long project name needs the smaller size to clear the close button */
.browser h3 {
    font-size: 8px;
}

.type-selector {
    flex: none;
    height: 50px;
    margin: 1px 0 2px;
    border: 1px solid #ccc;
    background: linear-gradient(#fff, #eaeaea);
    text-align: left;
}

.type-selector::after {
    margin: 0 2px 0 auto;
    border-width: 3px 3px 0;
}

.preview {
    display: grid;
    place-items: center;
    width: 49px;
    height: 47px;
    margin: 0 3px 0 1px;
    border: 1px solid #ddd;
}

.preview svg {
    width: 26px;
    height: 26px;
}

.type-row {
    display: flex;
    gap: 5px;
    flex: none;
    height: 18px;
    padding: 2px 0;
}

.type-row svg {
    margin-right: 3px;
}

select {
    appearance: none;
    padding: 0 2px;
    border: 1px solid #888;
    border-radius: 0;
    background: linear-gradient(45deg, transparent 50%, #333 50%) right 6px center / 3px 3px no-repeat,
        linear-gradient(315deg, transparent 50%, #333 50%) right 3px center / 3px 3px no-repeat,
        linear-gradient(#f4f4f4, #d9d9d9);
}

.type-row select {
    width: 72px;
}

.scroll-area {
    display: flex;
    flex: 1;
    min-height: 0;
    background: #fbfbfb;
}

.clip {
    flex: 1;
    min-width: 0;
    overflow: hidden;
}

.properties table {
    width: 100%;
    table-layout: fixed;
    border-collapse: collapse;
    background: #fcfcfc;
}

.properties tr {
    height: 13px;
}

.properties th,
.properties td {
    padding: 0 2px;
    border-bottom: 1px dotted #aaa;
    font-weight: 400;
    line-height: 12px;
    text-align: left;
    white-space: nowrap;
}

.properties th {
    padding-left: 8px;
    border-right: 1px dotted #aaa;
}

.properties .section th {
    padding: 0 3px;
    background: #dadada;
    line-height: 13px;
}

.section i {
    float: right;
    font-style: normal;
    transform: rotate(90deg);
}

.properties .off {
    color: #888;
}

.properties .fill {
    padding: 0;
}

.fill button {
    justify-content: center;
    width: 100%;
    height: 12px;
    border: 1px solid #666;
    border-radius: 2px;
    background: linear-gradient(#eee, #ccc);
}

.properties .current td {
    border: 1px solid #222;
}

input[type="checkbox"] {
    appearance: none;
    flex: none;
    display: block;
    width: 10px;
    height: 10px;
    margin: 0;
    border: 1px solid #888;
    background: #e8e8e8;
    font-size: 9px;
    line-height: 8px;
}

input[type="checkbox"]:checked::after {
    content: "✔";
}

input[type="checkbox"]:disabled {
    border-color: #ccc;
    background: #fff;
}

.properties footer {
    display: flex;
    align-items: center;
    justify-content: space-between;
    flex: none;
    height: 23px;
    padding-left: 2px;
    white-space: nowrap;
}

.properties footer a {
    color: #3478ad;
    text-decoration: underline;
}

.properties footer button {
    height: 15px;
    padding: 0 4px;
    border: 1px solid #888;
    color: #666;
}

/* Scrollbars */
.vscroll,
.hscroll {
    display: flex;
    flex: none;
    align-items: center;
    justify-content: space-between;
    background: #e9e9e9;
}

.vscroll {
    flex-direction: column;
    width: 12px;
    padding: 4px 0;
}

.vscroll::before,
.vscroll::after,
.hscroll::before,
.hscroll::after {
    content: "";
    border: 2px solid transparent;
}

.vscroll::before {
    border-bottom-color: #333;
    border-top: 0;
}

.vscroll::after {
    border-top-color: #333;
    border-bottom: 0;
}

.hscroll::before {
    border-right-color: #333;
    border-left: 0;
}

.hscroll::after {
    border-left-color: #333;
    border-right: 0;
}

.thumb {
    border: 1px solid #999;
    background: linear-gradient(90deg, #eee, #ccc);
}

.vscroll .thumb {
    width: 10px;
}

.props-scroll .thumb {
    height: 60px;
    margin: 44px 0 auto;
}

.tree-scroll .thumb {
    height: 68px;
    margin: 6px 0 auto;
}

.hscroll {
    height: 11px;
    padding: 0 4px;
}

.tree-hscroll {
    margin-right: 12px;
}

.tree-hscroll .thumb {
    width: 90px;
    height: 10px;
    margin-right: 26px;
    font-size: 6px;
    line-height: 8px;
    text-align: center;
}

/* Project browser */
.tree,
.tree ul {
    margin: 0;
    padding: 0;
    list-style: none;
    white-space: nowrap;
}

.tree {
    background: #fdfdfd;
}

.root {
    position: relative;
    margin-left: 6px;
    padding-left: 9px;
    border-left: 1px dotted #aaa;
}

.root > span {
    display: flex;
    align-items: center;
    gap: 2px;
    height: 14px;
}

.root b {
    padding: 0 2px 0 1px;
    background: #ddd;
    font-weight: 400;
}

.root .plus:first-child {
    margin-top: 1px;
}

.root ul {
    margin-left: 5px;
    border-left: 1px dotted #aaa;
}

.root li {
    position: relative;
    height: 13px;
    padding-left: 12px;
    line-height: 13px;
}

.root li::after {
    content: "";
    position: absolute;
    left: 1px;
    top: 6px;
    width: 9px;
    border-top: 1px dotted #888;
}

/* Expanders sit on the dotted guide lines */
.plus::before,
.minus::before {
    content: "";
    position: absolute;
    z-index: 1;
    left: -4px;
    top: 3px;
    width: 7px;
    height: 7px;
    border: 1px solid #888;
    background: linear-gradient(#333, #333) center / 3px 1px no-repeat, #fff;
}

.plus::before {
    background: linear-gradient(#333, #333) center / 3px 1px no-repeat,
        linear-gradient(#333, #333) center / 1px 3px no-repeat, #fff;
}

/* Drawing view */
.view {
    display: grid;
    grid-template-columns: minmax(0, 1fr) 13px;
    grid-template-rows: minmax(0, 1fr) 16px;
    background: #fbfbfb;
}

.canvas {
    position: relative;
    overflow: hidden;
}

.model {
    display: block;
    width: 100%;
    height: 100%;
    stroke: none;
}

.ink {
    fill: none;
    stroke: #0c0c0c;
}

.view-buttons {
    position: absolute;
    top: 6px;
    right: 3px;
    display: flex;
    gap: 3px;
}

.view-buttons svg {
    width: 10px;
    height: 10px;
}

.cube {
    position: absolute;
    top: 61px;
    right: -3px;
    width: 120px;
    height: 80px;
}

.cube text {
    fill: #777;
    stroke: none;
    font-size: 7px;
}

.cube .small {
    font-size: 6px;
}

.pointer {
    position: absolute;
    top: 67px;
    right: 102px;
    width: 10px;
    height: 16px;
}

.navbar {
    position: absolute;
    top: 148px;
    right: 2px;
    display: flex;
    flex-direction: column;
    align-items: center;
    width: 25px;
    height: 86px;
    padding: 2px;
    border: 1px solid #aaa;
    border-radius: 4px;
    background: #eee;
}

.navbar svg {
    width: 18px;
    height: 18px;
    stroke: #888;
}

.navbar button {
    margin: 5px 0;
}

.navbar i {
    border: 2px solid transparent;
    border-top-color: #777;
    border-bottom: 0;
}

.navbar hr {
    width: 100%;
    margin: 3px 0 0;
    border: 0;
    border-top: 1px solid #bbb;
}

.dot {
    flex: none;
    align-self: flex-end;
    width: 5px;
    height: 5px;
    border: 1px solid #888;
    border-radius: 50%;
}

.dot:last-child {
    margin-top: auto;
}

.view-scroll {
    width: 13px;
}

.view-scroll .thumb {
    height: 11px;
}

.view-bar {
    display: flex;
    align-items: center;
    gap: 3px;
    grid-column: 1;
}

.view-bar svg {
    width: 12px;
    height: 12px;
}

.scale {
    width: 55px;
    padding-left: 19px;
    white-space: nowrap;
}

.view-hscroll {
    flex: 1;
    margin-left: 4px;
}

.view-hscroll .thumb {
    width: 11px;
    height: 11px;
}

/* Status bar */
.status {
    display: flex;
    align-items: center;
    flex: none;
    gap: 5px;
    height: 14px;
    padding-left: 2px;
    border-top: 1px solid #777;
    background: linear-gradient(#d9d9d9, #c5c5c5);
    white-space: nowrap;
    overflow: hidden;
}

.hint {
    flex: none;
}

.status select {
    height: 13px;
    border-color: #ccc;
    background-image: linear-gradient(45deg, transparent 50%, #888 50%), linear-gradient(315deg, transparent 50%, #888 50%), linear-gradient(#f0f0f0, #f0f0f0);
    color: #888;
    opacity: 1;
}

.workset {
    width: 141px;
}

.option {
    width: 113px;
}

.count {
    display: flex;
    width: 35px;
}

.faded {
    opacity: 0.4;
}

.dynamic {
    display: flex;
    align-items: center;
    gap: 2px;
    width: 77px;
    margin-left: auto;
    overflow: hidden;
}

.dynamic input[type="checkbox"] {
    background: #fff;
    color: #2c7a2c;
}
```
